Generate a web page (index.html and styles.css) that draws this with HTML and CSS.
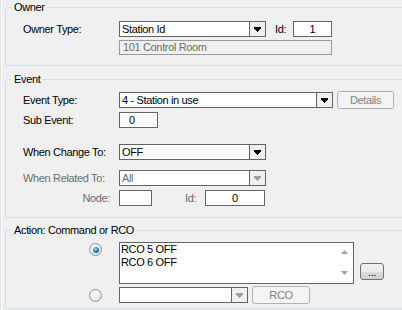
FILE: index.html
```html
<!DOCTYPE html>
<html lang="en">
<head>
    <meta charset="UTF-8">
    <title>Event Action</title>
    <link rel="stylesheet" href="styles.css">
</head>
<body>
    <fieldset class="group owner">
        <legend>Owner</legend>
        <div class="content">
            <div class="row">
                <span class="lbl">Owner Type:</span>
                <div class="combo w-147">
                    <span class="val">Station Id</span>
                    <span class="drop"><svg width="7" height="5"><path d="M0 0h7v2h-1v1h-1v1h-1v1h-1v-1h-1v-1h-1v-1h-1z"/></svg></span>
                </div>
                <span class="id-lbl">Id:</span>
                <div class="box num w-id">1</div>
            </div>
            <div class="row second">
                <span class="lbl"></span>
                <div class="box readonly w-name">101 Control Room</div>
            </div>
        </div>
    </fieldset>

    <fieldset class="group event">
        <legend>Event</legend>
        <div class="content">
            <div class="row tall">
                <span class="lbl">Event Type:</span>
                <div class="combo w-214">
                    <span class="val">4 - Station in use</span>
                    <span class="drop"><svg width="7" height="5"><path d="M0 0h7v2h-1v1h-1v1h-1v1h-1v-1h-1v-1h-1v-1h-1z"/></svg></span>
                </div>
                <button class="btn disabled w-details">Details</button>
            </div>
            <div class="row sub">
                <span class="lbl">Sub Event:</span>
                <div class="box w-sub">0</div>
            </div>
            <div class="row change">
                <span class="lbl">When Change To:</span>
                <div class="combo w-147">
                    <span class="val">OFF</span>
                    <span class="drop"><svg width="7" height="5"><path d="M0 0h7v2h-1v1h-1v1h-1v1h-1v-1h-1v-1h-1v-1h-1z"/></svg></span>
                </div>
            </div>
            <div class="row related">
                <span class="lbl dim">When Related To:</span>
                <div class="combo off w-147">
                    <span class="val">All</span>
                    <span class="drop"><svg width="7" height="5"><path d="M0 0h7v2h-1v1h-1v1h-1v1h-1v-1h-1v-1h-1v-1h-1z"/></svg></span>
                </div>
            </div>
            <div class="row node">
                <span class="lbl dim right">Node:</span>
                <div class="box w-node"></div>
                <span class="id-lbl dim node-id">Id:</span>
                <div class="box num w-nodeid">0</div>
            </div>
        </div>
    </fieldset>

    <fieldset class="group action">
        <legend>Action: Command or RCO</legend>
        <div class="content">
            <div class="row list-row">
                <span class="lbl"><span class="radio on"></span></span>
                <div class="listbox">
                    <div class="lines">
                        <div>RCO 5 OFF</div>
                        <div>RCO 6 OFF</div>
                    </div>
                    <div class="scroll">
                        <svg width="7" height="4"><path d="M3.5 0L7 4H0z"/></svg>
                        <svg width="7" height="4"><path d="M0 0h7L3.5 4z"/></svg>
                    </div>
                </div>
                <button class="btn more">...</button>
            </div>
            <div class="row tall rco-row">
                <span class="lbl"><span class="radio"></span></span>
                <div class="combo off w-rco">
                    <span class="val"></span>
                    <span class="drop"><svg width="7" height="5"><path d="M0 0h7v2h-1v1h-1v1h-1v1h-1v-1h-1v-1h-1v-1h-1z"/></svg></span>
                </div>
                <button class="btn disabled w-rcobtn">RCO</button>
            </div>
        </div>
    </fieldset>
</body>
</html>
```

FILE: styles.css
```css
body {
    margin: 0;
    width: 402px;
    height: 310px;
    overflow: hidden;
    background-color: #f0f0f0;
    box-shadow: inset 1px 0 #e2e2e2, inset 2px 0 #fafafa;
    font-family: "Liberation Sans", Arial, sans-serif;
    font-size: 11px;
    letter-spacing: -0.35px;
    color: #000;
}
.group {
    min-width: 0;
    margin: 0 -4px 0 5px;
    padding: 0;
    border: 1px solid #d5dfe5;
    border-radius: 3px;
}
.group legend {
    margin-left: 6px;
    padding: 0 2px;
    line-height: 13px;
}
.owner {
    margin-top: 1px;
}
.event {
    margin-top: 7px;
}
.action {
    margin-top: 6px;
}
.content {
    padding-left: 17px;
}
.owner .content {
    padding-top: 7px;
    padding-bottom: 10px;
}
.event .content {
    padding-top: 5px;
    padding-bottom: 11px;
}
.action .content {
    padding-top: 5px;
    padding-bottom: 4px;
}
.row {
    display: flex;
    align-items: center;
    height: 16px;
    line-height: 16px;
}
.row.tall {
    height: 18px;
}
.row.second {
    margin-top: 3px;
    height: 15px;
}
.row.sub {
    margin-top: 3px;
}
.row.change {
    margin-top: 16px;
}
.row.related {
    margin-top: 10px;
}
.row.node {
    margin-top: 4px;
}
.lbl {
    width: 96px;
    flex: none;
    white-space: nowrap;
}
.lbl.right {
    text-align: right;
    box-sizing: border-box;
    padding-right: 9px;
}
.dim {
    color: #6d6d6d;
}
.id-lbl {
    margin-left: 9px;
    width: 18px;
}
.node-id {
    margin-left: 33px;
    width: 20px;
}

/* edit boxes and combos */
.box, .combo {
    box-sizing: border-box;
    height: 16px;
    border: 1px solid #646464;
    background-color: #fff;
    line-height: 14px;
    white-space: nowrap;
}
.box {
    padding-left: 2px;
}
.box.num {
    text-align: center;
    padding-left: 0;
}
.box.readonly {
    height: 15px;
    line-height: 13px;
    border-color: #9a9a9a;
    background-color: #f0f0f0;
    color: #6d6d6d;
    padding-left: 3px;
}
.combo {
    display: flex;
}
.combo .val {
    flex: 1;
    padding-left: 2px;
    overflow: hidden;
}
.combo .drop {
    width: 16px;
    box-sizing: border-box;
    border-left: 1px solid #646464;
    background-color: #f0f0f0;
    display: flex;
    align-items: center;
    justify-content: center;
}
.combo .drop svg {
    fill: #000;
}
.combo.off .val {
    color: #6d6d6d;
}
.combo.off .drop svg {
    fill: #a0a0a0;
}
.w-147 { width: 147px; }
.w-214 { width: 214px; }
.w-id { width: 39px; }
.w-name { width: 213px; }
.w-sub { width: 39px; padding-left: 9px; }
.w-node { width: 33px; }
.w-nodeid { width: 60px; }
.w-rco { width: 129px; }

/* buttons */
.btn {
    box-sizing: border-box;
    font: inherit;
    letter-spacing: inherit;
    padding: 0;
    border-radius: 3px;
    line-height: 14px;
}
.btn.disabled {
    height: 18px;
    margin-left: 4px;
    border: 1px solid #adb2b5;
    background-color: #f4f4f4;
    color: #838383;
}
.w-details { width: 57px; }
.w-rcobtn { width: 58px; }
.btn.more {
    width: 24px;
    height: 17px;
    margin-left: 6px;
    align-self: flex-end;
    margin-bottom: 4px;
    border: 1px solid #707070;
    background: linear-gradient(#f2f2f2, #ebebeb 50%, #dddddd 51%, #cfcfcf);
    color: #000;
    line-height: 10px;
}

/* action rows */
.list-row {
    height: 42px;
    align-items: flex-start;
}
.rco-row {
    margin-top: 2px;
}
.radio {
    display: flex;
    align-items: center;
    justify-content: center;
    width: 13px;
    height: 13px;
    margin-left: 66px;
    box-sizing: border-box;
    border-radius: 50%;
    border: 1px solid #8f8f8f;
    background: radial-gradient(circle at 40% 35%, #ffffff, #d8d8d8);
}
.list-row .radio {
    margin-top: 1px;
}
.radio.on::after {
    content: "";
    width: 6px;
    height: 6px;
    border-radius: 50%;
    background: radial-gradient(circle at 40% 35%, #9ad8f8, #1a6fa8 60%, #0b4a7a);
}
.listbox {
    display: flex;
    width: 235px;
    height: 42px;
    box-sizing: border-box;
    border: 1px solid #646464;
    background-color: #fff;
}
.listbox .lines {
    flex: 1;
    padding-left: 1px;
    line-height: 13px;
}
.listbox .scroll {
    width: 17px;
    display: flex;
    flex-direction: column;
    justify-content: space-between;
    align-items: center;
    padding: 7px 0 8px;
    box-sizing: border-box;
}
.listbox .scroll svg {
    fill: #a3a3a3;
}
```
